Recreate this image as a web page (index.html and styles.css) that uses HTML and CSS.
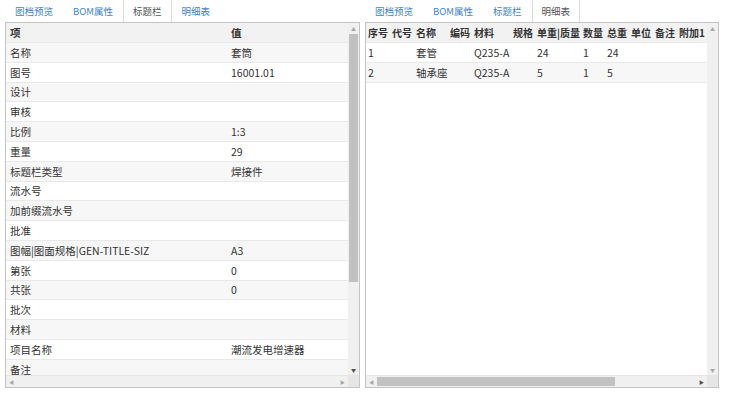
FILE: index.html
```html
<!DOCTYPE html>
<html lang="zh">
<head>
<meta charset="utf-8">
<title>标题栏</title>
<link rel="stylesheet" href="styles.css">
</head>
<body>
<div class="page">
  <section class="panel panel-left">
    <nav class="tabs">
      <span class="tab">图档预览</span>
      <span class="tab">BOM属性</span>
      <span class="tab active">标题栏</span>
      <span class="tab">明细表</span>
    </nav>
    <div class="grid">
      <div class="grid-body">
        <div class="table kv">
          <div class="row head"><span class="c-key">项</span><span class="c-val">值</span></div>
          <div class="row"><span class="c-key">名称</span><span class="c-val">套筒</span></div>
          <div class="row"><span class="c-key">图号</span><span class="c-val">16001.01</span></div>
          <div class="row"><span class="c-key">设计</span><span class="c-val"></span></div>
          <div class="row"><span class="c-key">审核</span><span class="c-val"></span></div>
          <div class="row"><span class="c-key">比例</span><span class="c-val">1:3</span></div>
          <div class="row"><span class="c-key">重量</span><span class="c-val">29</span></div>
          <div class="row"><span class="c-key">标题栏类型</span><span class="c-val">焊接件</span></div>
          <div class="row"><span class="c-key">流水号</span><span class="c-val"></span></div>
          <div class="row"><span class="c-key">加前缀流水号</span><span class="c-val"></span></div>
          <div class="row"><span class="c-key">批准</span><span class="c-val"></span></div>
          <div class="row"><span class="c-key">图幅|图面规格|GEN-TITLE-SIZ</span><span class="c-val">A3</span></div>
          <div class="row"><span class="c-key">第张</span><span class="c-val">0</span></div>
          <div class="row"><span class="c-key">共张</span><span class="c-val">0</span></div>
          <div class="row"><span class="c-key">批次</span><span class="c-val"></span></div>
          <div class="row"><span class="c-key">材料</span><span class="c-val"></span></div>
          <div class="row"><span class="c-key">项目名称</span><span class="c-val">潮流发电增速器</span></div>
          <div class="row"><span class="c-key">备注</span><span class="c-val"></span></div>
        </div>
        <div class="vscroll">
          <span class="arrow up">&#9650;</span>
          <div class="vtrack"><div class="vthumb"></div></div>
          <span class="arrow down dark">&#9660;</span>
        </div>
      </div>
      <div class="hscroll">
        <span class="arrow hl">&#9664;</span>
        <div class="htrack"></div>
        <span class="arrow hr">&#9654;</span>
        <span class="corner"></span>
      </div>
    </div>
  </section>

  <section class="panel panel-right">
    <nav class="tabs">
      <span class="tab">图档预览</span>
      <span class="tab">BOM属性</span>
      <span class="tab">标题栏</span>
      <span class="tab active">明细表</span>
    </nav>
    <div class="grid">
      <div class="grid-body">
        <div class="table list">
          <div class="row head">
            <span class="w24">序号</span><span class="w24">代号</span><span class="w34">名称</span><span class="w24 r">编码</span><span class="w39">材料</span><span class="w24 r">规格</span><span class="w46">单重|质量</span><span class="w24">数量</span><span class="w24">总重</span><span class="w24">单位</span><span class="w24">备注</span><span class="w28">附加1</span>
          </div>
          <div class="row">
            <span class="w24">1</span><span class="w24"></span><span class="w34">套管</span><span class="w24"></span><span class="w39">Q235-A</span><span class="w24"></span><span class="w46">24</span><span class="w24">1</span><span class="w24">24</span><span class="w24"></span><span class="w24"></span><span class="w28"></span>
          </div>
          <div class="row">
            <span class="w24">2</span><span class="w24"></span><span class="w34">轴承座</span><span class="w24"></span><span class="w39">Q235-A</span><span class="w24"></span><span class="w46">5</span><span class="w24">1</span><span class="w24">5</span><span class="w24"></span><span class="w24"></span><span class="w28"></span>
          </div>
        </div>
        <div class="vscroll">
          <span class="arrow up">&#9650;</span>
          <div class="vtrack"></div>
          <span class="arrow down">&#9660;</span>
        </div>
      </div>
      <div class="hscroll">
        <span class="arrow hl">&#9664;</span>
        <div class="htrack"><div class="hthumb"></div></div>
        <span class="arrow hr dark">&#9654;</span>
        <span class="corner"></span>
      </div>
    </div>
  </section>
</div>
</body>
</html>
```

FILE: styles.css
```css
* { box-sizing: border-box; }

html, body {
  margin: 0;
  padding: 0;
  background: #ffffff;
}

body {
  font-family: "Noto Sans CJK SC", "Noto Sans", sans-serif;
  font-size: 10.5px;
  color: #333333;
}

.page {
  display: flex;
  gap: 5px;
  padding-left: 5px;
}

.panel {
  display: flex;
  flex-direction: column;
}

.panel-left { width: 355px; }
.panel-right { width: 354px; }

.tabs {
  display: flex;
  height: 22px;
}

.tab {
  display: flex;
  align-items: center;
  padding: 0 10px;
  font-size: 9.5px;
  color: #3d85cf;
  white-space: nowrap;
}

.tab.active {
  color: #555555;
  background: #ffffff;
  border-left: 1px solid #dddddd;
  border-right: 1px solid #dddddd;
  padding: 0 9px;
}

.grid {
  border: 1px solid #c4c4c4;
  height: 366px;
  display: flex;
  flex-direction: column;
  overflow: hidden;
}

.grid-body {
  display: flex;
  flex: 1;
  min-height: 0;
}

.table {
  flex: 1;
  overflow: hidden;
  min-width: 0;
}

.row {
  display: flex;
  height: 19.8px;
  align-items: center;
  border-bottom: 1px solid #e9e9e9;
  white-space: nowrap;
}

.row.head {
  height: 20px;
  background: #f2f2f2;
  font-weight: bold;
  color: #333333;
}

.kv .row:nth-child(odd):not(.head) { background: #ffffff; }
.kv .row:nth-child(even) { background: #f7f7f7; }

.kv .c-key {
  width: 221px;
  padding-left: 4px;
}

.kv .c-val {
  padding-left: 4px;
}

.list .row span {
  padding-left: 2px;
  overflow: hidden;
}

.list .row.head { font-size: 10px; }

.list .row:nth-child(3) { background: #f7f7f7; }

.list .r { text-align: right; padding-right: 2px; }

.w24 { width: 24px; flex: none; }
.w28 { width: 30px; flex: none; }
.w34 { width: 34px; flex: none; }
.w39 { width: 39px; flex: none; }
.w46 { width: 46px; flex: none; }

.vscroll {
  width: 11px;
  flex: none;
  display: flex;
  flex-direction: column;
  background: #f0f0f0;
}

.arrow {
  display: flex;
  align-items: center;
  justify-content: center;
  font-size: 5px;
  color: #a8a8a8;
  flex: none;
  height: 11px;
  width: 11px;
}

.arrow.dark { color: #505050; }

.vtrack {
  flex: 1;
  padding: 0 1px;
}

.vthumb {
  background: #c1c1c1;
  height: 248px;
}

.hscroll {
  height: 12px;
  flex: none;
  display: flex;
  background: #f0f0f0;
  border-top: 1px solid #e4e4e4;
}

.htrack {
  flex: 1;
  padding: 1px 0;
}

.hthumb {
  background: #c1c1c1;
  width: 238px;
  height: 100%;
}

.corner {
  width: 11px;
  flex: none;
  background: #e6e6e6;
}
```
